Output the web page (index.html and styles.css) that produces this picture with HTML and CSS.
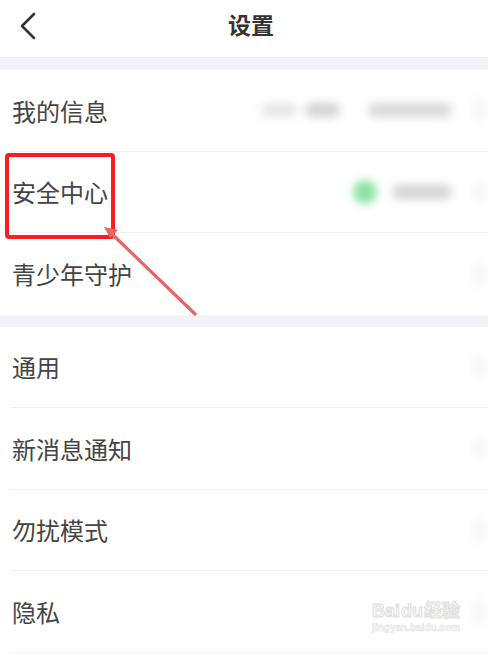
FILE: index.html
```html
<!DOCTYPE html>
<html lang="zh-CN">
<head>
    <meta charset="UTF-8">
    <meta name="viewport" content="width=device-width, initial-scale=1.0">
    <title>设置</title>
    <link rel="stylesheet" href="styles.css">
</head>
<body>
    <div class="page">
        <div class="topbar">
            <div class="back">
                <svg width="18" height="28" viewBox="0 0 18 28">
                    <path d="M15 2 L3 14 L15 26" fill="none" stroke="#333" stroke-width="2.6" stroke-linecap="round" stroke-linejoin="round"/>
                </svg>
            </div>
            <h1 class="title">设置</h1>
            <div></div>
        </div>

        <div class="band"></div>

        <div class="group">
            <div class="row">
                <span class="label">我的信息</span>
                <div class="extra">
                    <span class="blob light" style="width:36px"></span>
                    <span class="blob" style="width:35px"></span>
                    <span class="blob wide" style="width:84px"></span>
                    <span class="chev"></span>
                </div>
            </div>
            <div class="row">
                <span class="label">安全中心</span>
                <div class="extra">
                    <span class="dot"></span>
                    <span class="blob" style="width:60px"></span>
                    <span class="chev"></span>
                </div>
            </div>
            <div class="row last">
                <span class="label">青少年守护</span>
                <div class="extra"><span class="chev"></span></div>
            </div>
        </div>

        <div class="band"></div>

        <div class="group">
            <div class="row">
                <span class="label">通用</span>
                <div class="extra"><span class="chev"></span></div>
            </div>
            <div class="row">
                <span class="label">新消息通知</span>
                <div class="extra"><span class="chev"></span></div>
            </div>
            <div class="row">
                <span class="label">勿扰模式</span>
                <div class="extra"><span class="chev"></span></div>
            </div>
            <div class="row">
                <span class="label">隐私</span>
                <div class="extra"><span class="chev"></span></div>
            </div>
        </div>

        <!-- annotation over the screenshot -->
        <div class="highlight"></div>
        <svg class="arrow" width="488" height="654" viewBox="0 0 488 654">
            <line x1="195" y1="314" x2="112" y2="234" stroke="#e96464" stroke-width="3.2" stroke-linecap="round"/>
            <path d="M104 227 L118 230 L110 238 Z" fill="#e96464"/>
        </svg>

        <div class="watermark">
            <div class="wm-logo">Bai<span class="wm-du">du</span>经验</div>
            <div class="wm-url">jingyan.baidu.com</div>
        </div>
    </div>
</body>
</html>
```

FILE: styles.css
```css
body {
    margin: 0;
    font-family: "Noto Sans CJK SC", "Noto Sans", sans-serif;
    background-color: #ffffff;
    color: #3b3b3b;
}

.page {
    position: relative;
    width: 488px;
    height: 654px;
    overflow: hidden;
}

.topbar {
    display: grid;
    grid-template-columns: 1fr auto 1fr;
    align-items: center;
    height: 57px;
    border-bottom: 1px solid #e9e9ef;
}

.back {
    padding-left: 19px;
    padding-bottom: 6px;
    display: flex;
    align-items: center;
}

.title {
    margin: 0 0 10px 14px;
    font-size: 23px;
    font-weight: bold;
    color: #333;
}

.band {
    height: 12px;
    background-color: #f3f3f7;
}

.group {
    background-color: #fff;
}

.row {
    display: flex;
    align-items: center;
    height: 81.5px;
    margin-left: 10px;
    border-bottom: 1px solid #f1f1f3;
    box-sizing: border-box;
}

.row.last {
    border-bottom: none;
}

.label {
    padding-left: 2px;
    font-size: 24px;
    color: #444;
}

.extra {
    margin-left: auto;
    display: flex;
    align-items: center;
    gap: 8px;
    padding-right: 4px;
}

.blob {
    height: 14px;
    border-radius: 7px;
    background-color: #d2d2d2;
    filter: blur(5px);
}

.blob.light {
    background-color: #e6e6e6;
}

.blob.wide {
    margin-left: 20px;
    background-color: #d8d8d8;
}

.dot {
    width: 24px;
    height: 24px;
    border-radius: 50%;
    background-color: #8fe3a3;
    filter: blur(4px);
    margin-right: 7px;
}

.chev {
    width: 10px;
    height: 22px;
    margin-left: 14px;
    background-color: #f5f5f5;
    filter: blur(4px);
}

.highlight {
    position: absolute;
    left: 5px;
    top: 153px;
    width: 102px;
    height: 78px;
    border: 4px solid #ff1c1c;
    border-radius: 4px;
}

.arrow {
    position: absolute;
    left: 0;
    top: 0;
}

.watermark {
    position: absolute;
    left: 372px;
    top: 600px;
    text-align: center;
}

.wm-logo {
    font-family: "Liberation Sans", "Noto Sans CJK SC", sans-serif;
    font-size: 18px;
    font-weight: bold;
    line-height: 22px;
    color: #fafafa;
    -webkit-text-stroke: 1px #dedede;
}

.wm-du {
    margin: 0 1px;
}

.wm-url {
    font-family: "Liberation Sans", sans-serif;
    font-size: 10px;
    font-weight: bold;
    color: #fafafa;
    -webkit-text-stroke: 0.5px #e0e0e0;
}
```
